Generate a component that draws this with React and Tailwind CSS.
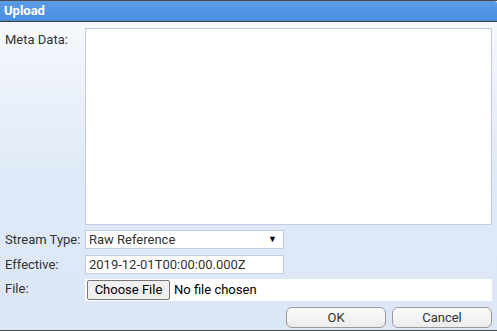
export default function App() {
  const font = { fontFamily: "Roboto, 'Noto Sans', sans-serif" };
  return (
    <div className="w-[497px] h-[331px] flex flex-col bg-[#dce7f6] border-t border-b border-[#4a4a4a] text-[13px] text-[#333]" style={font}>
      <div className="h-[21px] shrink-0 bg-gradient-to-b from-[#5b9ce8] to-[#4a8de0] border-b border-[#3d3d3d] rounded-tr-[3px] flex items-center pl-[4px] text-white font-bold text-[13px]">
        Upload
      </div>
      <div className="flex-1 bg-gradient-to-b from-[#f6f8fc] via-[#dfe9f7] to-[#dce7f6] pl-[5px] pr-[5px] pt-[6px] flex flex-col">
        <div className="flex">
          <div className="w-[80px] pt-[2px]">Meta Data:</div>
          <textarea className="w-[407px] h-[197px] bg-white border border-[#c3cbe0] resize-none outline-none" />
        </div>
        <div className="flex items-center mt-[5px]">
          <div className="w-[80px]">Stream Type:</div>
          <div className="w-[199px] h-[19px] bg-white border border-[#c3cbe0] flex items-center justify-between pl-[3px] pr-[6px]">
            <span>Raw Reference</span>
            <span className="text-[9px] text-black">▼</span>
          </div>
        </div>
        <div className="flex items-center mt-[5px]">
          <div className="w-[80px]">Effective:</div>
          <div className="w-[199px] h-[19px] bg-white border border-[#c3cbe0] flex items-center pl-[3px]">
            2019-12-01T00:00:00.000Z
          </div>
        </div>
        <div className="flex mt-[5px]">
          <div className="w-[80px]">File:</div>
          <div className="w-[407px] h-[22px] bg-white flex items-center pl-[2px]">
            <div className="h-[20px] w-[83px] bg-[#efefef] border border-[#767676] rounded-[2px] flex items-center justify-center text-black">
              Choose File
            </div>
            <span className="ml-[4px] text-black">No file chosen</span>
          </div>
        </div>
        <div className="flex justify-end gap-[6px] mt-[6px]">
          <button className="w-[100px] h-[21px] rounded-[6px] border border-[#9a9a9a] bg-gradient-to-b from-[#fafafa] to-[#ececec] text-[#333] text-[13px]" style={font}>OK</button>
          <button className="w-[100px] h-[21px] rounded-[6px] border border-[#9a9a9a] bg-gradient-to-b from-[#fafafa] to-[#ececec] text-[#333] text-[13px]" style={font}>Cancel</button>
        </div>
      </div>
    </div>
  );
}
